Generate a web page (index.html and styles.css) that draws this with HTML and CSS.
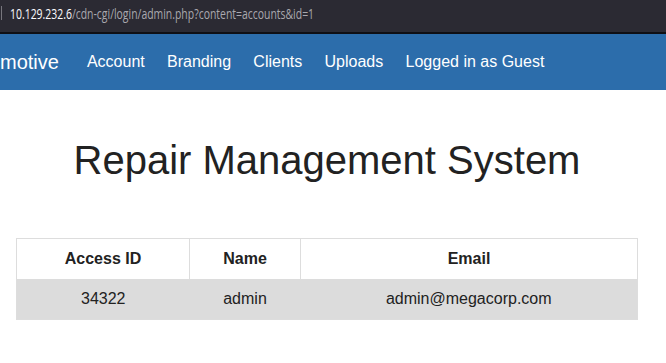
FILE: index.html
```html
<!DOCTYPE html>
<html lang="en">
<head>
    <meta charset="UTF-8">
    <meta name="viewport" content="width=device-width, initial-scale=1.0">
    <title>Repair Management System</title>
    <link rel="stylesheet" href="styles.css">
</head>
<body>
    <div class="urlbar">
        <span class="caret"></span>
        <span class="url"><span class="host">10.129.232.6</span>/cdn-cgi/login/admin.php?content=accounts&amp;id=1</span>
    </div>

    <nav class="navbar">
        <span class="brand">motive</span>
        <a href="#">Account</a>
        <a href="#">Branding</a>
        <a href="#">Clients</a>
        <a href="#">Uploads</a>
        <a href="#">Logged in as Guest</a>
    </nav>

    <h1>Repair Management System</h1>

    <table class="accounts">
        <tr>
            <th class="col-id">Access ID</th>
            <th class="col-name">Name</th>
            <th>Email</th>
        </tr>
        <tr>
            <td>34322</td>
            <td>admin</td>
            <td>admin@megacorp.com</td>
        </tr>
    </table>
</body>
</html>
```

FILE: styles.css
```css
body {
    margin: 0;
    font-family: 'Liberation Sans', Arial, sans-serif;
    color: #222;
    background-color: #fff;
    overflow: hidden;
}
.urlbar {
    height: 32px;
    background-color: #2b2a33;
    border-bottom: 2px solid #0f0f14;
    display: flex;
    align-items: center;
    padding-left: 1px;
    font-family: 'Open Sans', sans-serif;
    font-size: 14px;
    color: #a9a8ae;
}
.caret {
    width: 1px;
    height: 14px;
    background-color: #77767d;
    margin-right: 8px;
    margin-top: -6px;
}
.url {
    margin-top: -6px;
    white-space: nowrap;
    transform: scaleX(0.745);
    transform-origin: left center;
}
.host {
    color: #fbfbfe;
}
.navbar {
    height: 56px;
    background-color: #2c6dab;
    display: flex;
    align-items: center;
}
.brand {
    font-size: 20px;
    color: #fff;
    margin-right: 28px;
}
.navbar a {
    color: #fff;
    text-decoration: none;
    font-size: 16px;
    margin-right: 22.3px;
}
h1 {
    font-weight: normal;
    font-size: 40px;
    text-align: center;
    margin: 48px 0 0 -12px;
    line-height: 44px;
    color: #222;
}
.accounts {
    margin: 56px 0 0 16px;
    width: 622px;
    border-collapse: collapse;
    border: 1px solid #ddd;
    font-size: 16px;
}
.accounts th,
.accounts td {
    text-align: center;
    height: 40px;
    padding: 0;
}
.accounts th {
    border-left: 1px solid #ddd;
    font-weight: bold;
}
.accounts td {
    background-color: #dcdcdc;
}
.col-id {
    width: 172px;
}
.col-name {
    width: 110px;
}
```
